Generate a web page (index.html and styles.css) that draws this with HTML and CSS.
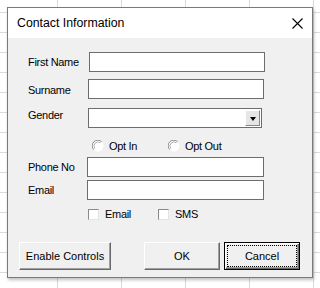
FILE: index.html
```html
<!DOCTYPE html>
<html lang="en">
<head>
    <meta charset="UTF-8">
    <title>Contact Information</title>
    <link rel="stylesheet" href="styles.css">
</head>
<body>
    <!-- Dialog window over the sheet -->
    <div class="dialog">
        <div class="title-bar">
            <span class="title">Contact Information</span>
            <svg class="close" width="11" height="11" viewBox="0 0 11 11">
                <path d="M0.5 0.5 L10.5 10.5 M10.5 0.5 L0.5 10.5" stroke="#000" stroke-width="1.1" fill="none"/>
            </svg>
        </div>

        <div class="form">
            <div class="field first">
                <label class="field-label">First Name</label>
                <input type="text" class="text-box">
            </div>
            <div class="field surname">
                <label class="field-label">Surname</label>
                <input type="text" class="text-box">
            </div>
            <div class="field gender">
                <label class="field-label">Gender</label>
                <div class="combo">
                    <span class="combo-btn"><span class="arrow"></span></span>
                </div>
            </div>

            <div class="options radios">
                <span class="option">
                    <svg width="12" height="12" viewBox="0 0 12 12">
                        <circle cx="6" cy="6" r="5.5" fill="#fff"/>
                        <path d="M1.8 9.6 A5.3 5.3 0 0 1 9.6 1.8" stroke="#8a8a8a" fill="none"/>
                        <path d="M2.8 8.4 A4 4 0 0 1 8.4 2.8" stroke="#b0b0b0" fill="none"/>
                    </svg>
                    Opt In
                </span>
                <span class="option">
                    <svg width="12" height="12" viewBox="0 0 12 12">
                        <circle cx="6" cy="6" r="5.5" fill="#fff"/>
                        <path d="M1.8 9.6 A5.3 5.3 0 0 1 9.6 1.8" stroke="#8a8a8a" fill="none"/>
                        <path d="M2.8 8.4 A4 4 0 0 1 8.4 2.8" stroke="#b0b0b0" fill="none"/>
                    </svg>
                    Opt Out
                </span>
            </div>

            <div class="field phone">
                <label class="field-label">Phone No</label>
                <input type="text" class="text-box">
            </div>
            <div class="field email">
                <label class="field-label">Email</label>
                <input type="text" class="text-box">
            </div>

            <div class="options checks">
                <span class="option"><span class="check"></span>Email</span>
                <span class="option"><span class="check"></span>SMS</span>
            </div>
        </div>

        <!-- Buttons -->
        <div class="buttons">
            <button class="btn btn-wide">Enable Controls</button>
            <button class="btn btn-ok">OK</button>
            <button class="btn btn-default">Cancel</button>
        </div>
    </div>
</body>
</html>
```

FILE: styles.css
```css
/* Sheet behind the dialog */
body {
    margin: 0;
    width: 320px;
    height: 288px;
    overflow: hidden;
    font-family: 'Liberation Sans', Arial, sans-serif;
    font-size: 11px;
    letter-spacing: -0.3px;
    color: #000;
    background-color: #fff;
    background-image:
        linear-gradient(to right, #dadada 1px, transparent 1px),
        linear-gradient(to bottom, #dadada 1px, transparent 1px);
    background-size: 64px 20px;
    background-position: 57px 12px;
}

/* Dialog window */
.dialog {
    margin: 7px 0 0 7px;
    width: 306px;
    height: 271px;
    box-sizing: border-box;
    border: 1px solid #7a7a7a;
    background-color: #f0f0f0;
    box-shadow: 1px 2px 3px rgba(0, 0, 0, 0.25);
}

.title-bar {
    height: 30px;
    background-color: #fff;
    display: flex;
    align-items: center;
    justify-content: space-between;
    padding: 0 9px 0 9px;
}

.title {
    font-size: 12.3px;
    letter-spacing: 0;
}

.close {
    display: block;
}

/* Form rows */
.form {
    display: flex;
    flex-direction: column;
    padding: 14px 0 0 20px;
}

.field {
    display: flex;
    align-items: center;
    height: 20px;
}

.field-label {
    width: 60px;
    flex-shrink: 0;
}

.text-box {
    height: 20px;
    width: 176px;
    margin: 0;
    padding: 0 3px;
    box-sizing: border-box;
    border: 1px solid #6d6d6d;
    background-color: #fff;
    font: inherit;
}

.first .field-label { width: 61px; }
.surname { margin-top: 7px; }
.surname .field-label { padding-top: 2px; }
.gender { margin-top: 9px; }
.gender .field-label { align-self: flex-start; padding-top: 1px; }
.phone { margin-top: 4px; }
.phone .field-label,
.email .field-label { width: 59px; }
.phone .text-box,
.email .text-box { width: 177px; }
.email { margin-top: 3px; }

/* Combo box */
.combo {
    width: 174px;
    height: 20px;
    box-sizing: border-box;
    border: 1px solid #6d6d6d;
    background-color: #fff;
    display: flex;
    justify-content: flex-end;
    padding: 1px;
}

.combo-btn {
    width: 15px;
    box-sizing: border-box;
    background-color: #e6e6e6;
    border-left: 1px solid #fff;
    border-top: 1px solid #fff;
    border-right: 1px solid #888;
    border-bottom: 1px solid #888;
    display: flex;
    align-items: center;
    justify-content: center;
}

.arrow {
    width: 0;
    height: 0;
    border-left: 3.5px solid transparent;
    border-right: 3.5px solid transparent;
    border-top: 4px solid #000;
    margin-top: 1px;
}

/* Radio and check rows */
.options {
    display: flex;
    align-items: center;
}

.option {
    display: flex;
    align-items: center;
}

.radios {
    margin-top: 11px;
    height: 14px;
    padding-left: 64px;
}

.radios .option { width: 76px; }
.radios svg { margin-right: 5px; }

.checks {
    margin-top: 8px;
    height: 12px;
    padding-left: 60px;
}

.checks .option { width: 70px; }

.check {
    width: 11px;
    height: 11px;
    box-sizing: border-box;
    background-color: #fff;
    border-top: 1px solid #8a8a8a;
    border-left: 1px solid #8a8a8a;
    border-right: 1px solid #e3e3e3;
    border-bottom: 1px solid #e3e3e3;
    margin-right: 6px;
}

/* Buttons */
.buttons {
    display: flex;
    margin-top: 22px;
    padding-left: 11px;
}

.btn {
    height: 28px;
    padding: 0;
    font: inherit;
    color: #000;
    background-color: #f0f0f0;
    border: 1px solid;
    border-color: #fff #696969 #696969 #fff;
    box-shadow: inset -1px -1px #a0a0a0;
    box-sizing: border-box;
}

.btn-wide { width: 92px; }
.btn-ok { width: 76px; margin-left: 33px; }

.btn-default {
    width: 76px;
    margin-left: 4px;
    border-color: #000;
    box-shadow: inset 1px 1px #fff, inset -1px -1px #696969, inset -2px -2px #a0a0a0;
    outline: 1px dotted #000;
    outline-offset: -4px;
}
```
